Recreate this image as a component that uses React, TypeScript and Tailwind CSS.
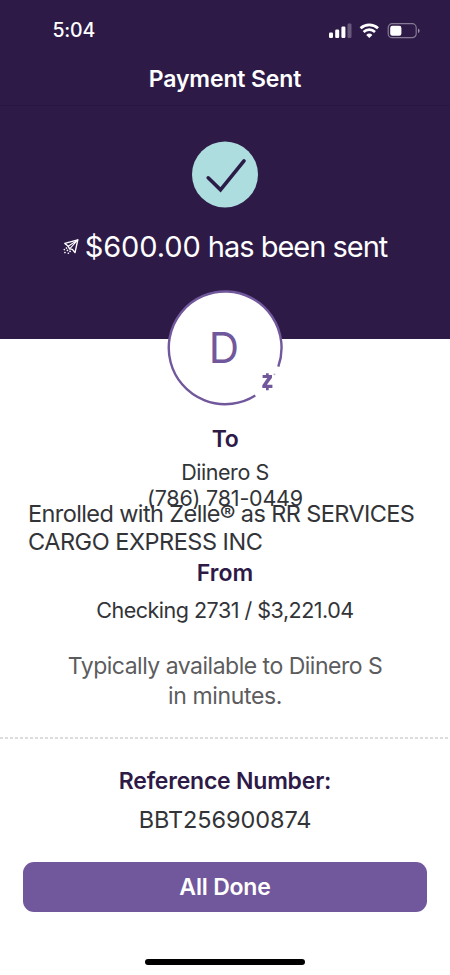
function StatusIcons() {
  return (
    <svg className="block" width="92" height="18" viewBox="0 0 92 18" fill="none">
      <rect x="1" y="10.5" width="4" height="5.5" rx="1.2" fill="#fff" />
      <rect x="7.2" y="7.5" width="4" height="8.5" rx="1.2" fill="#fff" />
      <rect x="13.4" y="4.5" width="4" height="11.5" rx="1.2" fill="#fff" />
      <rect x="19.5" y="1.5" width="4" height="14.5" rx="1.2" fill="#fff" fillOpacity="0.28" />
      <path d="M32.6 6.3A13 13 0 0 1 50 6.3" stroke="#fff" strokeWidth="2.8" />
      <path d="M35.6 9.9A8.4 8.4 0 0 1 47 9.9" stroke="#fff" strokeWidth="2.7" />
      <path d="M41.3 16L38.2 12.9A4.5 4.5 0 0 1 44.4 12.9Z" fill="#fff" />
      <rect x="60.2" y="1.7" width="28" height="14" rx="4" stroke="#fff" strokeOpacity="0.42" strokeWidth="1.2" />
      <rect x="62.2" y="3.7" width="11.2" height="10" rx="2.2" fill="#fff" />
      <path d="M90 6.4V11.1A2.5 2.5 0 0 0 90 6.4Z" fill="#fff" fillOpacity="0.5" />
    </svg>
  );
}

function CheckBadge() {
  return (
    <svg className="block" width="66" height="67" viewBox="0 0 66 67" fill="none">
      <circle cx="33" cy="33.5" r="33" fill="#addddf" />
      <path d="M16.2 36.8L28.5 48.8L52 19.8" stroke="#2a1b47" strokeWidth="3.6" strokeLinecap="round" />
    </svg>
  );
}

function SendIcon() {
  return (
    <svg className="block shrink-0" width="16" height="16" viewBox="0 0 16 16" fill="none" stroke="#fff" strokeLinejoin="round" strokeLinecap="round">
      <path d="M14.8 0.9L1.8 4.4L5.2 7.2L6.6 9.9L9.4 10.4L12 13.6Z" strokeWidth="1.4" />
      <path d="M14.8 0.9L5.2 7.2M14.8 0.9L6.6 9.9" strokeWidth="1.1" />
      <path d="M3.4 9.1H3.5M1.3 10.6H1.4M4.4 11.4H4.5M1.9 13.6H2M7 12.4H7.1M5.3 14.2H5.4" strokeWidth="1.6" />
    </svg>
  );
}

function Avatar() {
  return (
    <div className="relative flex h-[116px] w-[116px] items-center justify-center">
      <svg className="absolute inset-0" width="116" height="116" viewBox="0 0 116 116" fill="none">
        <circle cx="58" cy="57.7" r="56.6" fill="#fff" />
        <path d="M88.3 105.5A56.4 56.4 0 1 1 111.3 76.7" stroke="#71579b" strokeWidth="2.4" />
        <path d="M95.6 85H105V87.8L99.9 94.8H105.4V97.9H95.3V95.2L100.3 88.1H95.6Z" fill="#71579b" />
        <path d="M99 83.2H101.7V86H99ZM99 97H101.7V100.3H99Z" fill="#71579b" />
        <circle cx="107.5" cy="84.3" r="0.9" fill="#b9abcf" />
      </svg>
      <span className="relative -left-px text-[42px] leading-[58px] text-[#71579b]">D</span>
    </div>
  );
}

export default function App() {
  return (
    <div className="flex h-[975px] w-[450px] flex-col overflow-hidden whitespace-nowrap bg-white font-['Inter',sans-serif] text-[#323438]">
      <header className="h-[338.5px] shrink-0 bg-[#2e1a47] text-white">
        <div className="flex h-[61px] items-center justify-between pl-[52.5px] pr-[30px]">
          <span className="pt-px text-[19.5px] font-medium tracking-[-0.2px]">5:04</span>
          <StatusIcons />
        </div>
        <div className="h-[45px] border-b border-[#281640] text-center">
          <h1 className="pt-px text-[23px] font-semibold leading-[35px] tracking-[-0.12px]">Payment Sent</h1>
        </div>
        <div className="flex flex-col items-center pt-[35px]">
          <CheckBadge />
          <div className="mt-[18.5px] flex h-10 items-center gap-[6px]">
            <SendIcon />
            <span className="text-[29px] leading-10 tracking-[-1px]">
              <span className="tracking-[-0.1px]">$600.00</span> has been sent
            </span>
          </div>
        </div>
      </header>
      <main className="-mt-[48.5px] flex flex-col items-center">
        <Avatar />
        <h2 className="mt-[18.5px] text-[23px] font-semibold leading-7 tracking-[-0.5px] text-[#2e1a47]">To</h2>
        <p className="mt-[6px] text-[21.5px] leading-[26px] tracking-[-0.45px]">Diinero S</p>
        <p className="text-[21.5px] leading-[26px] tracking-[-0.2px]">(786) 781-0449</p>
        <p className="-mt-[10.5px] self-stretch pl-[28px] text-[23.5px] leading-[27.5px]">
          <span className="tracking-[-0.6px]">Enrolled with Zelle® as RR SERVICES</span>
          <br />
          <span className="tracking-[-0.48px]">CARGO EXPRESS INC</span>
        </p>
        <h2 className="mt-[3.5px] text-[23px] font-semibold leading-7 text-[#2e1a47]">From</h2>
        <p className="mt-[10px] text-[21.5px] leading-[26px] tracking-[-0.5px]">Checking 2731 / $3,221.04</p>
        <p className="mt-[28px] text-center text-[23px] leading-[30px] text-[#5c5c5e]">
          <span className="tracking-[-0.5px]">Typically available to Diinero S</span>
          <br />
          <span className="tracking-[-0.35px]">in minutes.</span>
        </p>
        <div className="mt-[26px] h-[2px] self-stretch bg-[repeating-linear-gradient(90deg,#dcdcde_0_3px,#fff_3px_5px)]" />
        <h2 className="mt-[28.5px] text-[23px] font-semibold leading-7 tracking-[-0.22px] text-[#2e1a47]">Reference Number:</h2>
        <p className="mt-[10.5px] text-[23.5px] leading-7 tracking-[-0.08px]">BBT256900874</p>
        <button className="mt-[28px] h-[50.5px] w-[404px] rounded-[11px] bg-[#71579b] pt-px text-[23px] font-semibold tracking-[-0.2px] text-white">All Done</button>
        <div className="mt-[46.5px] h-[6px] w-[160px] rounded-full bg-black" />
      </main>
    </div>
  );
}
